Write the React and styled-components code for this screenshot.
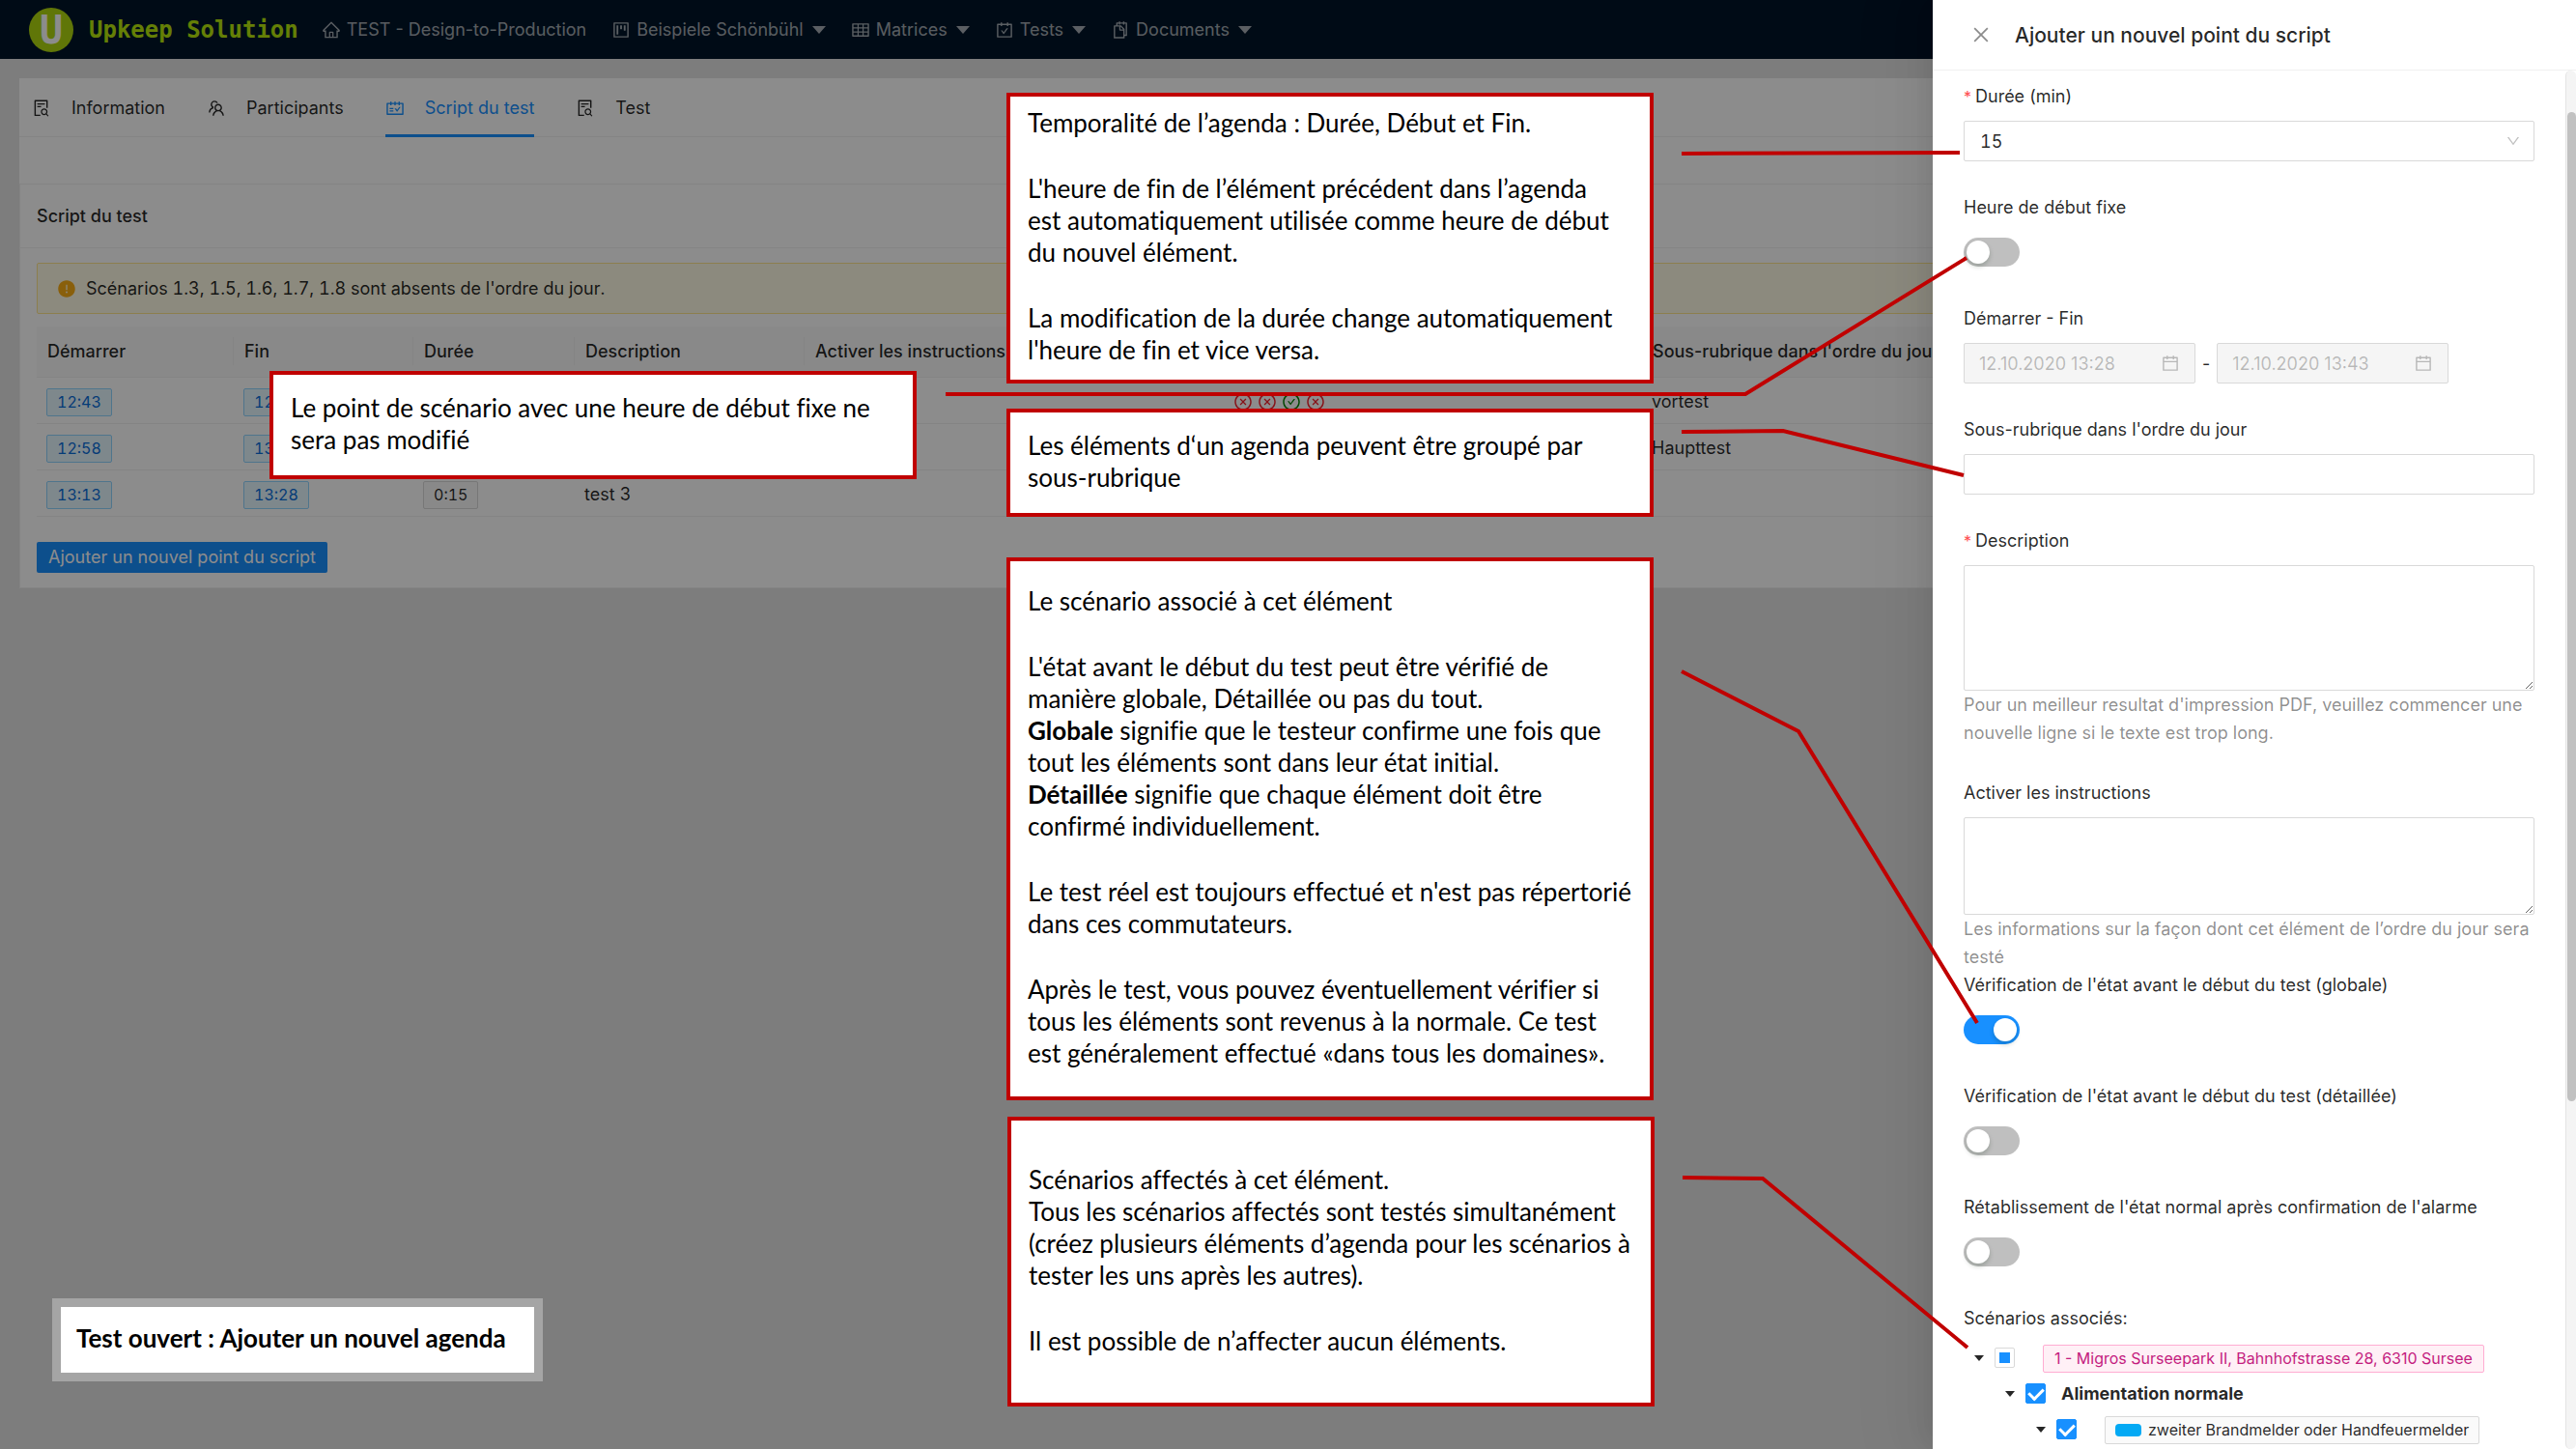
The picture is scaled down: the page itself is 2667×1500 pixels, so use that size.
import React from 'react';
import styled, { createGlobalStyle } from 'styled-components';
import {
  AiFillExclamationCircle,
  AiOutlineCalendar,
  AiOutlineCarryOut,
  AiOutlineCheckCircle,
  AiOutlineClose,
  AiOutlineCloseCircle,
  AiOutlineDown,
  AiOutlineFileSearch,
  AiOutlineHome,
  AiOutlineProject,
  AiOutlineSchedule,
  AiOutlineSnippets,
  AiOutlineTable,
  AiOutlineTeam,
} from 'react-icons/ai';

const GlobalStyle = createGlobalStyle`
  * {
    box-sizing: border-box;
  }

  body {
    margin: 0;
    background: #e3e3e3;
    color: rgba(0, 0, 0, 0.85);
    font-family: Inter, 'Liberation Sans', sans-serif;
    font-size: 18px;
    line-height: 29px;
  }

  button, input, select, textarea {
    font: inherit;
    color: inherit;
  }
`;

const Page = styled.div`
  position: relative;
  min-height: 100vh;
  overflow: hidden;
`;

/* ---------- top bar ---------- */

const TopBar = styled.header`
  display: flex;
  align-items: center;
  height: 61px;
  padding-left: 30px;
  background: #001529;
`;

const Logo = styled.span`
  display: flex;
  align-items: center;
  justify-content: center;
  width: 46px;
  height: 46px;
  border-radius: 50%;
  background: #b0d80f;
  color: #fff;
  font: bold 40px/46px 'DejaVu Sans Mono', monospace;
`;

const Brand = styled.span`
  margin-left: 16px;
  margin-right: 24px;
  color: #b9e80c;
  font: bold 24px/32px 'DejaVu Sans Mono', monospace;
`;

const Nav = styled.nav`
  display: flex;
  gap: 26px;
`;

const NavLink = styled.a`
  display: flex;
  align-items: center;
  gap: 6px;
  color: rgba(255, 255, 255, 0.65);
  text-decoration: none;
  white-space: nowrap;

  svg:first-child {
    font-size: 20px;
  }
`;

const CaretIcon = styled.svg`
  width: ${props => (props.$small ? 10 : 14)}px;
  height: ${props => (props.$small ? 6 : 8)}px;
  margin-left: ${props => (props.$small ? 0 : 3)}px;
  fill: currentColor;
`;

/* ---------- main card ---------- */

const Card = styled.main`
  margin: 20px 20px 0;
  background: #fff;
`;

const Tabs = styled.div`
  display: flex;
  gap: 43px;
  height: 61px;
  padding: 0 13px;
  border-bottom: 1px solid #f0f0f0;
`;

const Tab = styled.button`
  display: flex;
  align-items: center;
  gap: 21px;
  height: 61px;
  padding: 3px 0 0;
  border: 0;
  border-bottom: 3px solid ${props => (props.$active ? '#1890ff' : 'transparent')};
  background: none;
  color: ${props => (props.$active ? '#1890ff' : 'inherit')};

  svg {
    font-size: 20px;
  }
`;

const Section = styled.section`
  margin-top: 48px;
  border: 1px solid #f0f0f0;
`;

const SectionTitle = styled.h2`
  margin: 0;
  padding: 18px 17px;
  border-bottom: 1px solid #f0f0f0;
  font-size: 18px;
  font-weight: 500;
`;

const SectionBody = styled.div`
  padding: 15px 17px;
`;

const Alert = styled.div`
  display: flex;
  align-items: center;
  gap: 10px;
  padding: 11px 20px;
  border: 1px solid #ffe58f;
  border-radius: 2px;
  background: #fffbe6;
  font-variant-numeric: tabular-nums;

  svg {
    color: #faad14;
    font-size: 20px;
  }
`;

const Table = styled.table`
  width: 100%;
  margin: 13px 0 26px;
  border-collapse: collapse;
  table-layout: fixed;
`;

const Th = styled.th`
  width: ${props => (props.$width ? `${props.$width}px` : 'auto')};
  height: 52px;
  padding: 0;
  border-bottom: 1px solid #f0f0f0;
  background: #fafafa;
  font-weight: 500;
  text-align: left;
  white-space: nowrap;

  span {
    display: block;
    padding-left: 11px;
    border-right: 1px solid #f0f0f0;
  }
`;

const Td = styled.td`
  height: 48px;
  padding: 3px 10px 0;
  border-bottom: 1px solid #f0f0f0;
`;

const tones = {
  blue: ['#e6f7ff', '#91d5ff', '#096dd9'],
  grey: ['#fafafa', '#d9d9d9', 'rgba(0, 0, 0, 0.85)'],
  pink: ['#fff0f6', '#ffadd2', '#c41d7f'],
};

const Tag = styled.span`
  display: inline-flex;
  align-items: center;
  gap: 7px;
  height: 29px;
  padding: 0 ${props => (props.$tone === 'pink' ? 11 : 10)}px;
  border: 1px solid ${props => tones[props.$tone][1]};
  border-radius: 2px;
  background: ${props => tones[props.$tone][0]};
  color: ${props => tones[props.$tone][2]};
  font-size: 16px;
  font-variant-numeric: ${props => (props.$tone === 'pink' ? 'normal' : 'tabular-nums')};
  line-height: 27px;
  vertical-align: middle;
  white-space: nowrap;
`;

const Status = styled.div`
  display: flex;
  gap: 5px;
  padding-left: 3px;
  font-size: 20px;
`;

const StatusMark = styled.span`
  display: flex;
  color: ${props => (props.$ok ? '#008000' : '#f5222d')};
`;

const PrimaryButton = styled.button`
  height: 32px;
  padding: 0 12px;
  border: 0;
  border-radius: 2px;
  background: #1890ff;
  color: #fff;
`;

const Mask = styled.div`
  position: absolute;
  inset: 0;
  background: rgba(0, 0, 0, 0.45);
`;

/* ---------- drawer ---------- */

const Drawer = styled.aside`
  position: absolute;
  top: 0;
  right: 0;
  display: flex;
  flex-direction: column;
  width: 666px;
  height: 100vh;
  background: #fff;
  box-shadow: -8px 0 21px -10px rgba(0, 0, 0, 0.08),
    -12px 0 36px rgba(0, 0, 0, 0.05), -16px 0 62px 21px rgba(0, 0, 0, 0.03);
`;

const DrawerHeader = styled.header`
  display: flex;
  flex: none;
  align-items: center;
  gap: 24px;
  height: 73px;
  padding-left: 39px;
  border-bottom: 1px solid #f0f0f0;
`;

const DrawerTitle = styled.h1`
  margin: 0;
  font-size: 21px;
  font-weight: 500;
`;

const CloseButton = styled.button`
  display: flex;
  padding: 0;
  border: 0;
  background: none;
  color: rgba(0, 0, 0, 0.45);
  font-size: 22px;
`;

const DrawerBody = styled.div`
  display: flex;
  flex: 1;
  min-height: 0;
`;

const Form = styled.form`
  flex: 1;
  min-width: 0;
  padding: 12px 32px 0;
  overflow: hidden;
`;

const ScrollTrack = styled.div`
  width: 11px;
  padding: 43px 0 0 1px;
  border-left: 1px solid #e4e4e4;
  border-radius: 6px;
  background: #f4f4f4;
`;

const ScrollThumb = styled.div`
  height: 74%;
  border-radius: 6px;
  background: #c1c1c1;
`;

const Field = styled.div`
  margin-bottom: ${props => (props.$tight ? 0 : 33)}px;
`;

const Label = styled.label`
  display: block;
  margin-bottom: 11px;
`;

const Required = styled.span`
  margin-right: 4px;
  color: #ff4d4f;
  font-size: 16px;
  line-height: 1;
`;

const Control = styled.div`
  position: relative;
  display: flex;
  align-items: center;
  gap: 7px;
  height: 42px;
`;

const Select = styled.select`
  width: 100%;
  height: 42px;
  padding: 0 16px;
  border: 1px solid #d9d9d9;
  border-radius: 2px;
  background: #fff;
  appearance: none;
  font-variant-numeric: tabular-nums;
`;

const SelectArrow = styled(AiOutlineDown)`
  position: absolute;
  right: 14px;
  color: rgba(0, 0, 0, 0.25);
  font-size: 16px;
  pointer-events: none;
`;

const TextInput = styled.input`
  display: block;
  width: 100%;
  height: 42px;
  padding: 0 14px;
  border: 1px solid #d9d9d9;
  border-radius: 2px;
`;

const TextArea = styled.textarea`
  display: block;
  width: 100%;
  height: ${props => props.$height}px;
  border: 1px solid #d9d9d9;
  border-radius: 2px;
  resize: vertical;
`;

const Help = styled.div`
  color: rgba(0, 0, 0, 0.45);
`;

const DateBox = styled.div`
  display: flex;
  align-items: center;
  width: 240px;
  height: 42px;
  padding: 0 15px;
  border: 1px solid #d9d9d9;
  border-radius: 2px;
  background: #f5f5f5;
  color: rgba(0, 0, 0, 0.25);

  input {
    flex: 1;
    min-width: 0;
    padding: 0;
    border: 0;
    background: none;
  }

  svg {
    font-size: 20px;
  }
`;

const Switch = styled.input`
  display: flex;
  width: 58px;
  height: 30px;
  margin: 0;
  padding: 3px;
  border-radius: 15px;
  background: #bfbfbf;
  appearance: none;

  &::before {
    content: '';
    width: 24px;
    height: 24px;
    border-radius: 50%;
    background: #fff;
    box-shadow: 0 3px 5px rgba(0, 35, 11, 0.2);
  }

  &:checked {
    justify-content: flex-end;
    background: #1890ff;
  }
`;

const Tree = styled.ul`
  margin: 8px 0 0;
  padding: 0;
  list-style: none;
`;

const TreeRow = styled.li`
  display: flex;
  align-items: center;
  height: 37px;
  padding-left: ${props => props.$level * 32}px;
`;

const TreeToggle = styled.button`
  display: flex;
  align-items: center;
  justify-content: center;
  width: 32px;
  padding: 0;
  border: 0;
  background: none;
`;

const Checkbox = styled.input`
  display: grid;
  place-items: center;
  width: 21px;
  height: 21px;
  margin: 0;
  border: 1px solid #d9d9d9;
  border-radius: 2px;
  background: #fff;
  appearance: none;

  &:checked {
    border-color: #1890ff;
    background: #1890ff;
  }

  &:checked::before {
    content: '';
    width: 7px;
    height: 12px;
    margin-top: -3px;
    border: solid #fff;
    border-width: 0 3px 3px 0;
    transform: rotate(45deg);
  }

  &[aria-checked='mixed']::before {
    content: '';
    width: 11px;
    height: 11px;
    background: #1890ff;
  }
`;

const TreeLabel = styled.label`
  margin-left: ${props => (props.$plain ? 16 : 29)}px;
  font-weight: ${props => (props.$plain ? 700 : 400)};
`;

const Swatch = styled.span`
  width: 27px;
  height: 13px;
  border-radius: 4px;
  background: #03a9f4;
`;

/* ---------- annotations ---------- */

const Note = styled.div`
  position: absolute;
  left: ${props => props.$x}px;
  top: ${props => props.$y}px;
  display: flex;
  flex-direction: column;
  justify-content: center;
  gap: 35px;
  width: 670px;
  height: ${props => props.$h}px;
  padding: 0 0 3px 18px;
  border: 4px solid #c00000;
  background: #fff;
  color: #000;
  font-family: Lato, sans-serif;
  font-size: 26px;
  font-variant-ligatures: none;
  line-height: 33px;
  white-space: nowrap;

  p {
    margin: 0;
  }
`;

const PageNote = styled.div`
  position: absolute;
  left: 54px;
  top: 1344px;
  display: flex;
  align-items: center;
  width: 508px;
  height: 86px;
  padding: 0 0 3px 16px;
  border: 9px solid #a5a5a5;
  background: #fff;
  color: #000;
  font: bold 26px/33px Lato, sans-serif;
  white-space: nowrap;
`;

const Pointers = styled.svg`
  position: absolute;
  inset: 0;
  width: 100%;
  height: 100%;
  fill: none;
  stroke: #c00000;
  stroke-width: 4;
  pointer-events: none;
`;

const navItems = [
  { icon: AiOutlineHome, text: 'TEST - Design-to-Production' },
  { icon: AiOutlineProject, text: 'Beispiele Schönbühl', menu: true },
  { icon: AiOutlineTable, text: 'Matrices', menu: true },
  { icon: AiOutlineCarryOut, text: 'Tests', menu: true },
  { icon: AiOutlineSnippets, text: 'Documents', menu: true },
];

const tabs = [
  { icon: AiOutlineFileSearch, text: 'Information' },
  { icon: AiOutlineTeam, text: 'Participants' },
  { icon: AiOutlineSchedule, text: 'Script du test', active: true },
  { icon: AiOutlineFileSearch, text: 'Test' },
];

const columns = [
  { title: 'Démarrer', width: 204 },
  { title: 'Fin', width: 186 },
  { title: 'Durée', width: 167 },
  { title: 'Description', width: 238 },
  { title: 'Activer les instructions', width: 431 },
  { title: '', width: 436 },
  { title: "Sous-rubrique dans l'ordre du jour" },
];

const rows = [
  { start: '12:43', end: '12:58', status: [false, false, true, false], group: 'vortest' },
  { start: '12:58', end: '13:13', group: 'Haupttest' },
  { start: '13:13', end: '13:28', duration: '0:15', text: 'test 3' },
];

const pointers = [
  '1741,159 2029,158',
  '979,408 1807,408 2036,267',
  '1741,447 1846,446 2033,492',
  '1741,695 1862,757 2047,1059',
  '1742,1219 1825,1220 2037,1395',
];

const Caret = ({ small }) => (
  <CaretIcon $small={small} viewBox="0 0 14 8" preserveAspectRatio="none" aria-hidden="true">
    <path d="M0 0h14L7 8z" />
  </CaretIcon>
);

const SwitchField = ({ id, label, checked }) => (
  <Field>
    <Label htmlFor={id}>{label}</Label>
    <Control>
      <Switch id={id} type="checkbox" role="switch" defaultChecked={checked} />
    </Control>
  </Field>
);

const ScriptTable = () => (
  <Table>
    <thead>
      <tr>
        {columns.map((column, i) => (
          <Th key={i} $width={column.width}><span>{column.title || '\u00a0'}</span></Th>
        ))}
      </tr>
    </thead>
    <tbody>
      {rows.map(row => (
        <tr key={row.start}>
          <Td><Tag $tone="blue">{row.start}</Tag></Td>
          <Td><Tag $tone="blue">{row.end}</Tag></Td>
          <Td>{row.duration && <Tag $tone="grey">{row.duration}</Tag>}</Td>
          <Td>{row.text}</Td>
          <Td />
          <Td>
            {row.status &&
              <Status>
                {row.status.map((ok, i) => (
                  <StatusMark key={i} $ok={ok}>
                    {ok ? <AiOutlineCheckCircle /> : <AiOutlineCloseCircle />}
                  </StatusMark>
                ))}
              </Status>
            }
          </Td>
          <Td>{row.group}</Td>
        </tr>
      ))}
    </tbody>
  </Table>
);

const ScriptDrawer = () => (
  <Drawer>
    <DrawerHeader>
      <CloseButton type="button" aria-label="Fermer"><AiOutlineClose /></CloseButton>
      <DrawerTitle>Ajouter un nouvel point du script</DrawerTitle>
    </DrawerHeader>
    <DrawerBody>
      <Form>
        <Field>
          <Label htmlFor="duration"><Required>*</Required>Durée (min)</Label>
          <Control>
            <Select id="duration" defaultValue="15">
              <option value="15">15</option>
            </Select>
            <SelectArrow />
          </Control>
        </Field>
        <SwitchField id="fixed" label="Heure de début fixe" />
        <Field>
          <Label htmlFor="start">Démarrer - Fin</Label>
          <Control>
            <DateBox>
              <input id="start" type="text" defaultValue="12.10.2020 13:28" disabled />
              <AiOutlineCalendar />
            </DateBox>
            -
            <DateBox>
              <input type="text" aria-label="Fin" defaultValue="12.10.2020 13:43" disabled />
              <AiOutlineCalendar />
            </DateBox>
          </Control>
        </Field>
        <Field>
          <Label htmlFor="group">Sous-rubrique dans l'ordre du jour</Label>
          <TextInput id="group" type="text" />
        </Field>
        <Field>
          <Label htmlFor="description"><Required>*</Required>Description</Label>
          <TextArea id="description" $height={130} />
          <Help>
            Pour un meilleur resultat d'impression PDF, veuillez commencer une
            nouvelle ligne si le texte est trop long.
          </Help>
        </Field>
        <Field $tight>
          <Label htmlFor="instructions">Activer les instructions</Label>
          <TextArea id="instructions" $height={101} />
          <Help>
            Les informations sur la façon dont cet élément de l’ordre du jour sera
            testé
          </Help>
        </Field>
        <SwitchField id="global" label="Vérification de l'état avant le début du test (globale)" checked />
        <SwitchField id="detailed" label="Vérification de l'état avant le début du test (détaillée)" />
        <SwitchField id="restore" label="Rétablissement de l'état normal après confirmation de l'alarme" />
        <div>Scénarios associés:</div>
        <Tree>
          <TreeRow $level={0}>
            <TreeToggle type="button" aria-label="Replier"><Caret small /></TreeToggle>
            <Checkbox id="site" type="checkbox" aria-checked="mixed" />
            <TreeLabel htmlFor="site">
              <Tag $tone="pink">1 - Migros Surseepark II, Bahnhofstrasse 28, 6310 Sursee</Tag>
            </TreeLabel>
          </TreeRow>
          <TreeRow $level={1}>
            <TreeToggle type="button" aria-label="Replier"><Caret small /></TreeToggle>
            <Checkbox id="supply" type="checkbox" defaultChecked />
            <TreeLabel htmlFor="supply" $plain>Alimentation normale</TreeLabel>
          </TreeRow>
          <TreeRow $level={2}>
            <TreeToggle type="button" aria-label="Replier"><Caret small /></TreeToggle>
            <Checkbox id="detector" type="checkbox" defaultChecked />
            <TreeLabel htmlFor="detector">
              <Tag $tone="grey"><Swatch />zweiter Brandmelder oder Handfeuermelder</Tag>
            </TreeLabel>
          </TreeRow>
        </Tree>
      </Form>
      <ScrollTrack><ScrollThumb /></ScrollTrack>
    </DrawerBody>
  </Drawer>
);

const Notes = () => (
  <>
    <Note $x={1042} $y={96} $h={301}>
      <p>Temporalité de l’agenda : Durée, Début et Fin.</p>
      <p>
        L'heure de fin de l’élément précédent dans l’agenda<br />
        est automatiquement utilisée comme heure de début<br />
        du nouvel élément.
      </p>
      <p>
        La modification de la durée change automatiquement<br />
        l'heure de fin et vice versa.
      </p>
    </Note>
    <Note $x={279} $y={384} $h={112}>
      <p>
        Le point de scénario avec une heure de début fixe ne<br />
        sera pas modifié
      </p>
    </Note>
    <Note $x={1042} $y={423} $h={112}>
      <p>
        Les éléments d‘un agenda peuvent être groupé par<br />
        sous-rubrique
      </p>
    </Note>
    <Note $x={1042} $y={577} $h={562}>
      <p>Le scénario associé à cet élément</p>
      <p>
        L'état avant le début du test peut être vérifié de<br />
        manière globale, Détaillée ou pas du tout.<br />
        <b>Globale</b> signifie que le testeur confirme une fois que<br />
        tout les éléments sont dans leur état initial.<br />
        <b>Détaillée</b> signifie que chaque élément doit être<br />
        confirmé individuellement.
      </p>
      <p>
        Le test réel est toujours effectué et n'est pas répertorié<br />
        dans ces commutateurs.
      </p>
      <p>
        Après le test, vous pouvez éventuellement vérifier si<br />
        tous les éléments sont revenus à la normale. Ce test<br />
        est généralement effectué «dans tous les domaines».
      </p>
    </Note>
    <Note $x={1043} $y={1156} $h={300}>
      <p>
        Scénarios affectés à cet élément.<br />
        Tous les scénarios affectés sont testés simultanément<br />
        (créez plusieurs éléments d’agenda pour les scénarios à<br />
        tester les uns après les autres).
      </p>
      <p>Il est possible de n’affecter aucun éléments.</p>
    </Note>
    <PageNote>Test ouvert : Ajouter un nouvel agenda</PageNote>
    <Pointers aria-hidden="true">
      {pointers.map(points => <polyline key={points} points={points} />)}
    </Pointers>
  </>
);

const App = () => (
  <Page>
    <GlobalStyle />
    <TopBar>
      <Logo>U</Logo>
      <Brand>Upkeep Solution</Brand>
      <Nav>
        {navItems.map(({ icon: Icon, text, menu }) => (
          <NavLink key={text} href="#">
            <Icon />
            {text}
            {menu && <Caret />}
          </NavLink>
        ))}
      </Nav>
    </TopBar>
    <Card>
      <Tabs>
        {tabs.map(({ icon: Icon, text, active }) => (
          <Tab key={text} type="button" $active={active}>
            <Icon />
            {text}
          </Tab>
        ))}
      </Tabs>
      <Section>
        <SectionTitle>Script du test</SectionTitle>
        <SectionBody>
          <Alert>
            <AiFillExclamationCircle />
            Scénarios 1.3, 1.5, 1.6, 1.7, 1.8 sont absents de l'ordre du jour.
          </Alert>
          <ScriptTable />
          <PrimaryButton type="button">Ajouter un nouvel point du script</PrimaryButton>
        </SectionBody>
      </Section>
    </Card>
    <Mask />
    <ScriptDrawer />
    <Notes />
  </Page>
);

export default App;
